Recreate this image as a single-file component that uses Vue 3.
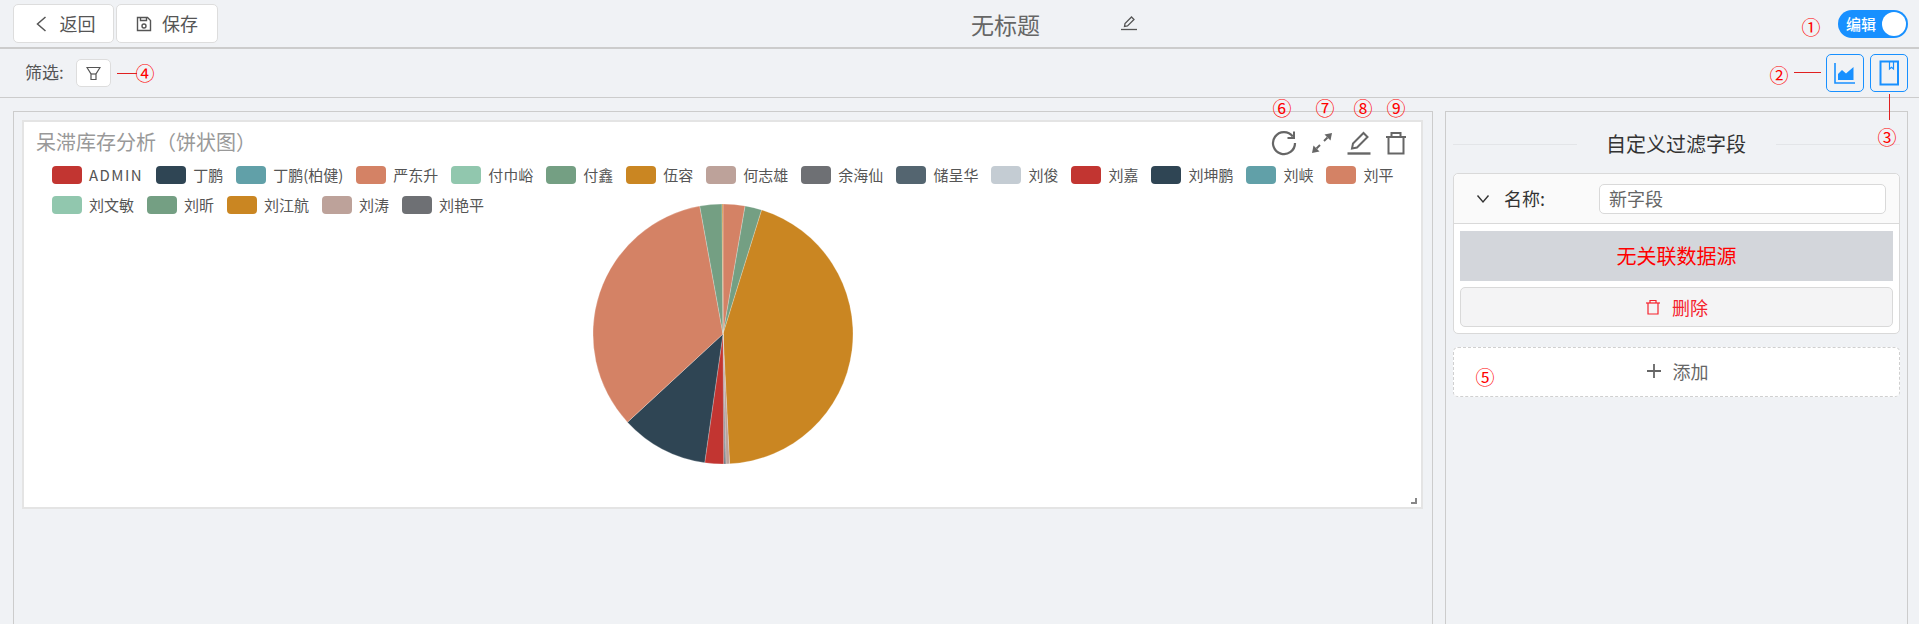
<script setup>
const legend = [
  ['ADMIN', '#c23531'], ['丁鹏', '#2f4554'], ['丁鹏(柏健)', '#61a0a8'], ['严东升', '#d48265'],
  ['付巾峪', '#91c7ae'], ['付鑫', '#749f83'], ['伍容', '#ca8622'], ['何志雄', '#bda29a'],
  ['余海仙', '#6e7074'], ['储呈华', '#546570'], ['刘俊', '#c4ccd3'], ['刘嘉', '#c23531'],
  ['刘坤鹏', '#2f4554'], ['刘峡', '#61a0a8'], ['刘平', '#d48265'], ['刘文敏', '#91c7ae'],
  ['刘昕', '#749f83'], ['刘江航', '#ca8622'], ['刘涛', '#bda29a'], ['刘艳平', '#6e7074']
]
const cx = 130, cy = 130, r = 130
const stops = [
  [0, 9.8, '#d48265'], [9.8, 17.3, '#749f83'], [17.3, 177.1, '#ca8622'],
  [177.1, 178.7, '#bda29a'], [178.7, 179.2, '#6e7074'], [179.2, 179.7, '#2f4554'],
  [179.7, 188.1, '#c23531'], [188.1, 227.3, '#2f4554'], [227.3, 349.7, '#d48265'],
  [349.7, 359.6, '#749f83'], [359.6, 360, '#ca8622']
]
const pt = (a) => {
  const t = (a * Math.PI) / 180
  return `${(cx + r * Math.sin(t)).toFixed(2)} ${(cy - r * Math.cos(t)).toFixed(2)}`
}
const slices = stops.map(([a, b, color]) => ({
  color,
  d: `M${cx} ${cy}L${pt(a)}A${r} ${r} 0 ${b - a > 180 ? 1 : 0} 1 ${pt(b)}Z`
}))
</script>

<template>
  <div class="page">
    <header class="topbar">
      <div class="btn-group">
        <button class="btn back">
          <svg width="12" height="16" viewBox="0 0 12 16" fill="none" stroke="#555" stroke-width="1.500"><path d="M10.500 1 2.500 8l8 7"/></svg>
          <span>返回</span>
        </button>
        <button class="btn save">
          <svg width="16" height="16" viewBox="0 0 16 16" fill="none" stroke="#555" stroke-width="1.400"><path d="M1.500 1.500h10l3 3v10h-13z"/><path d="M4.500 1.500v3h6v-3"/><circle cx="8" cy="10" r="2"/></svg>
          <span>保存</span>
        </button>
      </div>
      <div class="title-wrap">
        <span class="title">无标题</span>
        <svg class="title-pen" width="18" height="18" viewBox="0 0 18 18" fill="none" stroke="#555" stroke-width="1.300"><path d="M4.500 12.500 5 9.500 11.500 3l2.500 2.500L7.500 12z"/><path d="M1 15.500h16"/></svg>
      </div>
      <div class="switch"><span>编辑</span><i></i></div>
    </header>

    <div class="toolbar">
      <span class="filter-label">筛选:</span>
      <button class="filter-btn">
        <svg width="15" height="15" viewBox="0 0 15 15" fill="none" stroke="#555" stroke-width="1.200"><path d="M1 1.500h13L10 8v5.500H5V8z"/><path d="M5 8h5"/></svg>
      </button>
      <div class="tool-right">
        <button class="tool-btn">
          <svg width="24" height="24" viewBox="0 0 24 24"><path d="M2 2v20h20" fill="none" stroke="#1890ff" stroke-width="1.600"/><path d="M5 19v-6l4-4 4 3.500L20.500 6v13z" fill="#1890ff"/></svg>
        </button>
        <button class="tool-btn">
          <svg width="24" height="26" viewBox="0 0 24 26" fill="none" stroke="#1890ff" stroke-width="2"><path d="M3.500 1.500h17.500v23H3.500z"/><path d="M12.500 2v7l2-1.800 2 1.800V2" stroke-width="1.200"/></svg>
        </button>
      </div>
    </div>

    <main class="workspace">
      <section class="board">
        <article class="card">
          <div class="card-head">
            <h2>呆滞库存分析（饼状图）</h2>
            <div class="card-icons">
              <svg width="26" height="26" viewBox="0 0 26 26" fill="none" stroke="#666" stroke-width="2.200"><path d="M21.800 6.500A11 11 0 1 0 24 13"/><path d="M23 1.500v6.500h-6.500" stroke-width="2"/></svg>
              <svg width="22" height="22" viewBox="0 0 22 22" fill="#666" stroke="#666"><path d="M21 1 13.500 2.500l6 6z" stroke="none"/><path d="M16.500 5.500 13 9" stroke-width="2"/><path d="M1 21l7.500-1.500-6-6z" stroke="none"/><path d="M5.500 16.500 9 13" stroke-width="2"/></svg>
              <svg width="24" height="24" viewBox="0 0 24 24" fill="none" stroke="#666" stroke-width="2"><path d="M5 17.500l1-5L16.500 2l4 4L10 16.500z"/><path d="M0.500 22.500h23" stroke-width="2.400"/></svg>
              <svg width="22" height="24" viewBox="0 0 22 24" fill="none" stroke="#666" stroke-width="2"><path d="M1 6h20"/><path d="M6.500 6V2h9v4"/><path d="M3.500 6v16.500h15V6"/></svg>
            </div>
          </div>
          <ul class="legend">
            <li v-for="item in legend" :key="item[0]" :class="{ latin: item[0] === 'ADMIN' }">
              <i :style="{ background: item[1] }"></i><span>{{ item[0] }}</span>
            </li>
          </ul>
          <div class="pie-wrap">
            <svg class="pie" width="260" height="260" viewBox="0 0 260 260">
              <path v-for="(s, i) in slices" :key="i" :d="s.d" :fill="s.color" stroke="#fff" stroke-opacity=".45" stroke-width=".5"/>
            </svg>
          </div>
          <svg class="resize" width="6" height="6" viewBox="0 0 6 6"><path d="M4 0h2v6H0V4h4z" fill="#888"/></svg>
        </article>
      </section>

      <aside class="side">
        <div class="side-title"><span>自定义过滤字段</span></div>
        <div class="collapse">
          <div class="collapse-head">
            <svg width="14" height="10" viewBox="0 0 14 10" fill="none" stroke="#333" stroke-width="1.400"><path d="M1.500 1.500 7 8l5.500-6.500"/></svg>
            <span class="name-label">名称:</span>
            <div class="name-input">新字段</div>
          </div>
          <div class="collapse-body">
            <div class="no-source">无关联数据源</div>
            <button class="delete">
              <svg width="16" height="16" viewBox="0 0 16 16" fill="none" stroke="#f5222d" stroke-width="1.200"><path d="M1 4h14"/><path d="M5 4V1.500h6V4"/><path d="M3 4v11h10V4"/></svg>
              <span>删除</span>
            </button>
          </div>
        </div>
        <button class="add">
          <svg width="14" height="14" viewBox="0 0 14 14" stroke="#666" stroke-width="1.800"><path d="M7 0v14M0 7h14"/></svg>
          <span>添加</span>
        </button>
      </aside>
    </main>

    <span class="mark" style="left:1811px;top:27px">①</span>
    <span class="mark" style="left:1779px;top:75px">②</span>
    <span class="mark" style="left:1887px;top:137px">③</span>
    <span class="mark" style="left:145px;top:73px">④</span>
    <span class="mark" style="left:1485px;top:377px">⑤</span>
    <span class="mark" style="left:1282px;top:108px">⑥</span>
    <span class="mark" style="left:1325px;top:108px">⑦</span>
    <span class="mark" style="left:1363px;top:108px">⑧</span>
    <span class="mark" style="left:1396px;top:108px">⑨</span>
    <i class="rule rule-h" style="left:117px;top:73px;width:20px"></i>
    <i class="rule rule-h" style="left:1794px;top:72px;width:27px"></i>
    <i class="rule rule-v" style="left:1889px;top:94px;height:26px"></i>
  </div>
</template>

<style>
html, body { margin: 0; background: #f0f2f5; }
</style>

<style scoped>
.page {
  position: relative;
  height: 624px;
  overflow: hidden;
  background: #f0f2f5;
  font-family: "Noto Sans CJK SC", "Noto Sans", sans-serif;
  color: #555;
  display: flex;
  flex-direction: column;
}
button { font-family: inherit; cursor: pointer; }
.topbar {
  flex: none;
  height: 47px;
  border-bottom: 2px solid #ccc;
  display: flex;
  align-items: center;
  padding: 0 11px 0 13px;
  position: relative;
}
.btn-group { display: flex; gap: 2px; }
.btn {
  height: 39px;
  background: #fff;
  border: 1px solid #ddd;
  border-radius: 5px;
  display: flex;
  align-items: center;
  justify-content: center;
  gap: 10px;
  font-size: 18px;
  color: #555;
  padding: 0;
}
.btn span { margin-top: -2px; }
.back { width: 101px; gap: 13px; padding-left: 3px; }
.save { width: 102px; }
.title-wrap {
  position: absolute;
  left: 971px;
  top: 5px;
  display: flex;
  align-items: center;
  gap: 80px;
}
.title { font-size: 23px; line-height: 38px; color: #666; }
.title-pen { display: block; margin-top: -2px; }
.switch {
  margin-left: auto;
  width: 70px;
  height: 28px;
  border-radius: 14px;
  background: #1890ff;
  color: #fff;
  font-size: 15px;
  font-weight: 500;
  display: flex;
  align-items: center;
  justify-content: space-between;
  padding: 0 2px 0 8px;
  box-sizing: border-box;
}
.switch i {
  width: 24px;
  height: 24px;
  border-radius: 50%;
  background: #fff;
}
.toolbar {
  flex: none;
  height: 48px;
  border-bottom: 1px solid #ccc;
  display: flex;
  align-items: center;
  padding: 0 11px 0 25px;
}
.filter-label { font-size: 17px; width: 39px; color: #555; margin: -4px 12px 0 0; white-space: nowrap; }
.filter-btn {
  width: 35px;
  height: 28px;
  background: #fff;
  border: 1px solid #ddd;
  border-radius: 5px;
  padding: 0;
  display: flex;
  align-items: center;
  justify-content: center;
}
.tool-right { margin-left: auto; display: flex; gap: 6px; }
.tool-btn {
  width: 38px;
  height: 38px;
  border: 1px solid #1890ff;
  border-radius: 5px;
  background: transparent;
  padding: 0;
  display: flex;
  align-items: center;
  justify-content: center;
}
.workspace {
  flex: 1;
  min-height: 0;
  display: flex;
  gap: 12px;
  padding: 13px 11px 0 13px;
}
.board {
  flex: none;
  width: 1420px;
  box-sizing: border-box;
  border: 1px solid #ccc;
  border-bottom: 0;
  padding: 8px 0 0 8px;
}
.card {
  position: relative;
  width: 1401px;
  height: 389px;
  box-sizing: border-box;
  background: #fff;
  border: 2px solid #e4e4e4;
  display: flex;
  flex-direction: column;
}
.card-head {
  display: flex;
  justify-content: space-between;
  align-items: flex-start;
  padding: 6px 14px 0 13px;
  height: 38px;
  box-sizing: border-box;
}
.card-head h2 {
  margin: -2px 0 0 -1px;
  font-size: 20px;
  line-height: 32px;
  font-weight: 400;
  color: #999;
}
.card-icons { display: flex; align-items: center; gap: 14px; height: 30px; }
.card-icons svg { display: block; }
.legend {
  list-style: none;
  margin: 6px 0 0;
  padding: 0 0 0 28px;
  width: 1370px;
  box-sizing: border-box;
  display: flex;
  flex-wrap: wrap;
  gap: 12px 13px;
}
.legend li {
  display: flex;
  align-items: center;
  height: 18px;
  font-size: 15px;
  color: #555;
  white-space: nowrap;
}
.legend li span { margin-top: -2px; }
.legend li.latin { letter-spacing: 1.450px; }
.legend li i {
  width: 30px;
  height: 18px;
  border-radius: 4px;
  margin-right: 7px;
}
.pie-wrap {
  position: absolute;
  left: 569px;
  top: 82px;
}
.pie { display: block; }
.resize { position: absolute; right: 4px; bottom: 3px; }
.side {
  flex: none;
  width: 463px;
  box-sizing: border-box;
  border: 1px solid #ccc;
  border-bottom: 0;
  padding: 16px 7px 0;
}
.side-title {
  display: flex;
  align-items: center;
  gap: 30px;
  height: 32px;
  font-size: 20px;
  color: #333;
  margin-bottom: 13px;
}
.side-title span { margin: -2px 0 0 -1px; }
.side-title::before, .side-title::after {
  content: "";
  flex: 1;
  height: 1px;
  background: #e3e5e8;
}
.collapse {
  height: 161px;
  box-sizing: border-box;
  background: #fff;
  border: 1px solid #d9d9d9;
  border-radius: 5px;
}
.collapse-head {
  height: 49px;
  box-sizing: content-box;
  border-bottom: 1px solid #d9d9d9;
  background: #fafafa;
  border-radius: 5px 5px 0 0;
  display: flex;
  align-items: center;
  padding: 0 13px 0 22px;
}
.name-label {
  width: 95px;
  margin: -2px 0 0 14px;
  font-size: 18px;
  color: #333;
}
.name-input {
  flex: 1;
  height: 30px;
  box-sizing: border-box;
  background: #fff;
  border: 1px solid #d9d9d9;
  border-radius: 5px;
  font-size: 18px;
  line-height: 26px;
  padding-left: 9px;
  color: #666;
}
.collapse-body { padding: 7px 6px 0; }
.no-source {
  height: 50px;
  background: #d3d6db;
  color: #f00;
  font-size: 20px;
  line-height: 50px;
  text-align: center;
}
.delete {
  margin-top: 6px;
  width: 100%;
  height: 40px;
  background: #f4f4f5;
  border: 1px solid #d9d9d9;
  border-radius: 5px;
  display: flex;
  align-items: center;
  justify-content: center;
  gap: 11px;
  font-size: 18px;
  color: #f5222d;
  padding: 0;
}
.add {
  margin-top: 13px;
  width: 100%;
  height: 50px;
  background: #fff;
  border: 1px dashed #d0d0d0;
  border-radius: 5px;
  display: flex;
  align-items: center;
  justify-content: center;
  gap: 12px;
  font-size: 18px;
  color: #666;
  padding: 0 0 3px 2px;
}
.mark {
  position: absolute;
  transform: translate(-50%, -50%);
  font-size: 19px;
  line-height: 20px;
  color: #f00;
}
.rule { position: absolute; background: #e02020; }
.rule-h { height: 1px; }
.rule-v { width: 1px; }
</style>
